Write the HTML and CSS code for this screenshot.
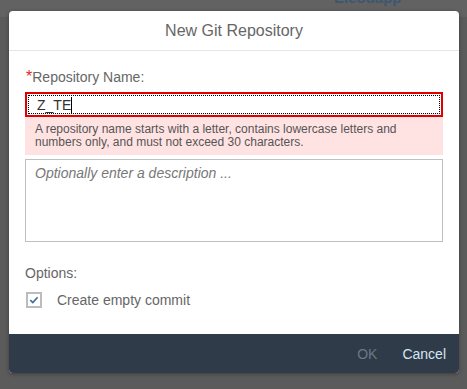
FILE: index.html
```html
<!DOCTYPE html>
<html>
<head>
<meta charset="utf-8">
<link rel="stylesheet" href="styles.css">
</head>
<body>
<div class="backdrop-bar"><span class="app-name">Eleodapp</span></div>
<div class="dialog">
  <div class="dialog-header">New Git Repository</div>
  <div class="dialog-content">
    <div class="field-label"><span class="req">*</span>Repository Name:</div>
    <div class="name-input"><div class="focus-ring"><span class="value">Z_TE</span><span class="caret"></span></div></div>
    <div class="error-msg">A repository name starts with a letter, contains lowercase letters and numbers only, and must not exceed 30 characters.</div>
    <div class="desc-area"><span class="placeholder">Optionally enter a description ...</span></div>
    <div class="options-label">Options:</div>
    <div class="check-row">
      <span class="checkbox"><svg width="12" height="12" viewBox="0 0 12 12"><path d="M2.3 6.2 L4.8 8.6 L9.6 3.2" fill="none" stroke="#3a6d9e" stroke-width="1.6"/></svg></span>
      <span class="check-label">Create empty commit</span>
    </div>
  </div>
  <div class="dialog-footer">
    <span class="btn btn-disabled">OK</span>
    <span class="btn btn-cancel">Cancel</span>
  </div>
</div>
</body>
</html>
```
FILE: styles.css
```css
html, body {
  margin: 0;
  padding: 0;
}
body {
  background: #5b5b5b;
  font-family: "Liberation Sans", Arial, sans-serif;
  width: 467px;
  height: 389px;
  overflow: hidden;
}
.backdrop-bar {
  height: 17px;
  background: #626262;
  display: flex;
  justify-content: flex-start;
  padding-left: 334px;
  overflow: hidden;
  margin-bottom: -6px;
}
.app-name {
  color: #3d5670;
  font-size: 15px;
  font-weight: bold;
  line-height: 15px;
  margin-top: -10px;
}
.dialog {
  position: relative;
  margin-left: 9px;
  width: 450px;
  background: #fff;
  border-radius: 4px;
  box-shadow: 0 1px 4px rgba(0,0,0,0.35);
  overflow: hidden;
}
.dialog-header {
  height: 39px;
  line-height: 39px;
  border-bottom: 1px solid #e5e5e5;
  text-align: center;
  font-size: 16px;
  color: #666;
}
.dialog-content {
  padding: 17px 16px 24px 16px;
}
.field-label {
  font-size: 14px;
  line-height: 18px;
  color: #666;
}
.req {
  color: #e52929;
  font-size: 16px;
  margin-left: 1px;
}
.name-input {
  margin-top: 6px;
  height: 25px;
  box-sizing: border-box;
  border: 2px solid #e00000;
  padding: 1px;
}
.focus-ring {
  height: 100%;
  box-sizing: border-box;
  border: 1px dotted #000;
  display: flex;
  align-items: center;
  padding-left: 8px;
}
.value {
  font-size: 14px;
  color: #333;
}
.caret {
  display: inline-block;
  width: 1px;
  height: 16px;
  background: #000;
}
.error-msg {
  background: #ffe3e3;
  font-size: 12px;
  line-height: 13px;
  color: #555;
  padding: 6px 10px 6px 10px;
}
.desc-area {
  margin-top: 4px;
  height: 83px;
  box-sizing: border-box;
  border: 1px solid #bfbfbf;
  padding: 4px 9px;
}
.placeholder {
  font-size: 14px;
  line-height: 16px;
  font-style: italic;
  color: #777;
}
.options-label {
  margin-top: 22px;
  font-size: 14px;
  line-height: 18px;
  color: #666;
}
.check-row {
  margin-top: 8px;
  height: 20px;
  display: flex;
  align-items: center;
}
.checkbox {
  margin-left: 1px;
  width: 16px;
  height: 16px;
  box-sizing: border-box;
  border: 2px solid #bcbcbc;
  display: flex;
  align-items: center;
  justify-content: center;
}
.check-label {
  margin-left: 15px;
  font-size: 14px;
  color: #666;
}
.dialog-footer {
  height: 39px;
  background: #2f3b48;
  display: flex;
  justify-content: flex-end;
  align-items: center;
  padding-right: 13px;
  gap: 25px;
}
.btn {
  font-size: 14px;
}
.btn-disabled {
  color: #6b7886;
}
.btn-cancel {
  color: #d6e6f5;
}
```
